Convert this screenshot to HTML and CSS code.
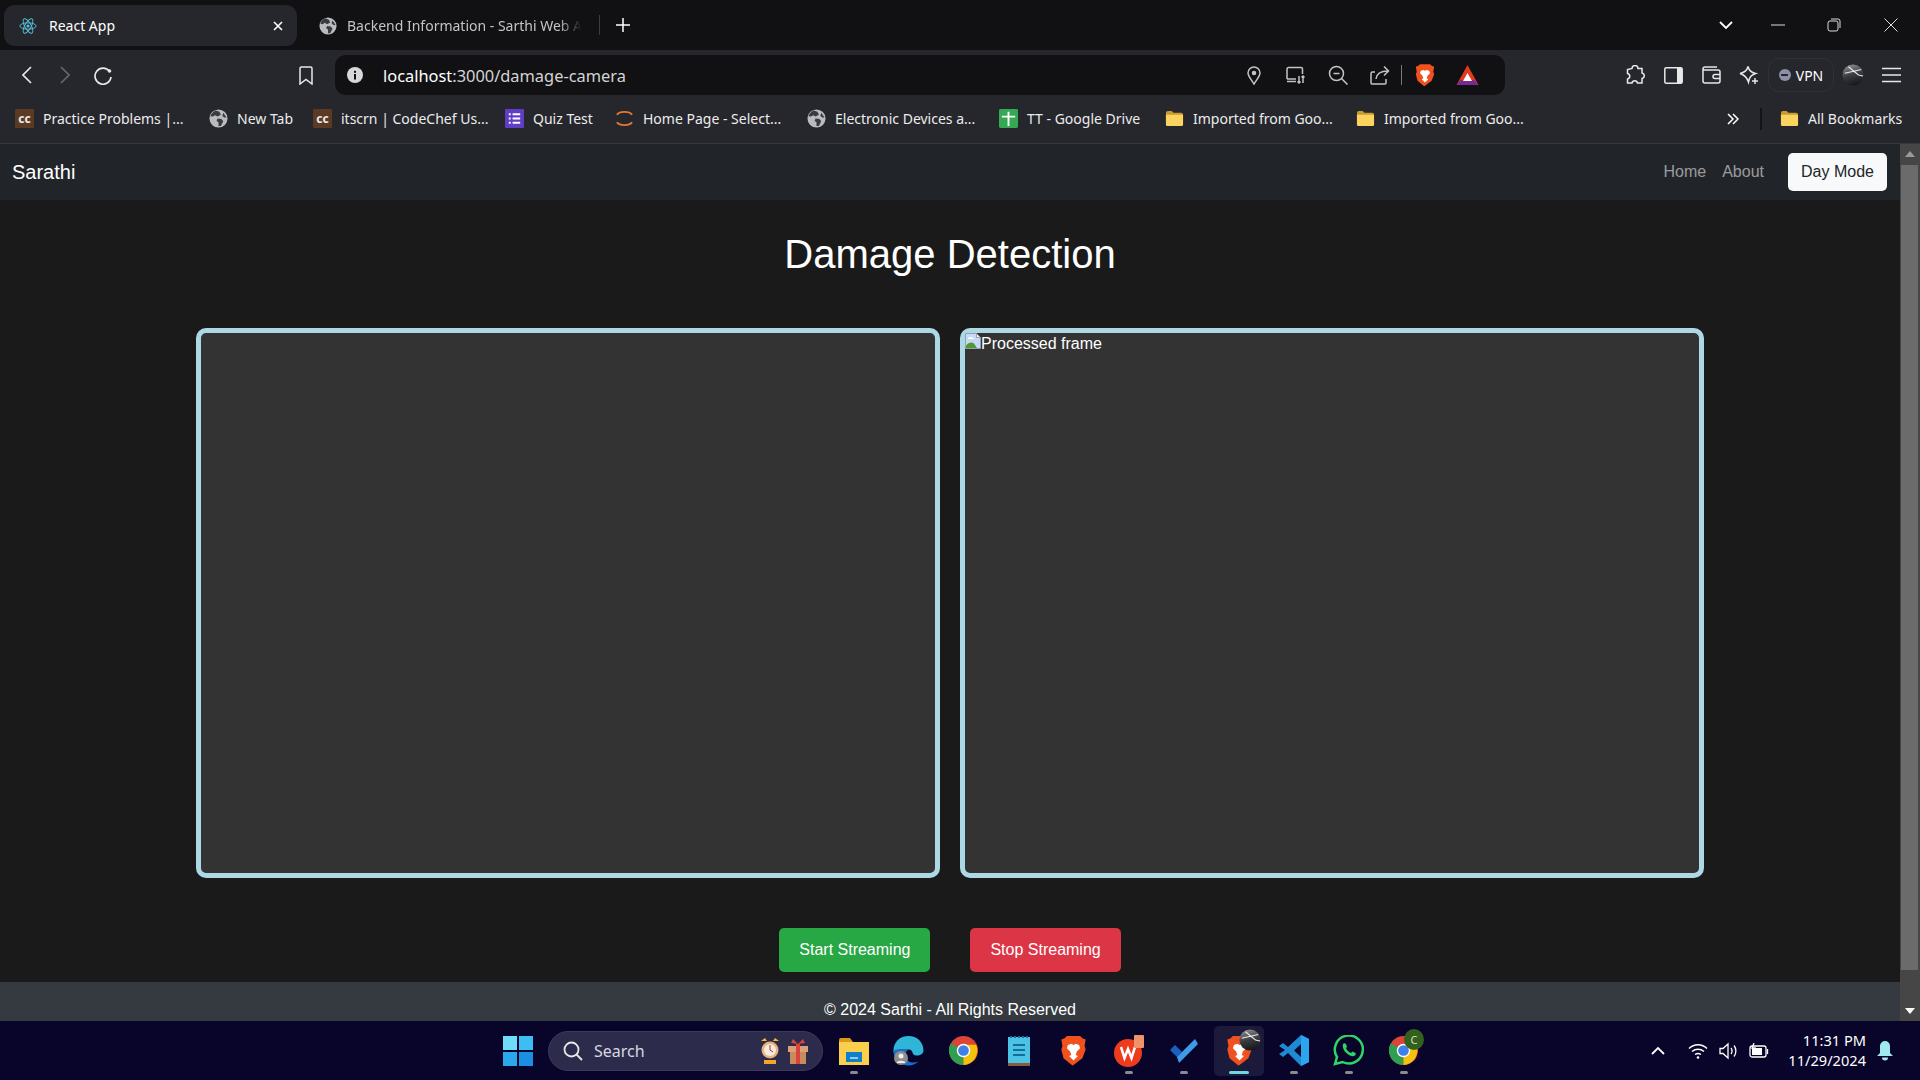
FILE: index.html
```html
<!DOCTYPE html>
<html lang="en">
  <head>
    <meta charset="UTF-8" />
    <title>React App</title>
    <link rel="stylesheet" href="styles.css">
  </head>
  <body>
    <!-- shared icons -->
    <svg class="defs" width="0" height="0">
      <defs>
        <linearGradient id="ball" x1="0.3" y1="0" x2="0.6" y2="1">
          <stop offset="0" stop-color="#8f8f8f"/>
          <stop offset="0.5" stop-color="#3a3b40"/>
          <stop offset="1" stop-color="#15161a"/>
        </linearGradient>
      </defs>
      <symbol id="globe" viewBox="0 0 20 20">
        <circle cx="10" cy="10" r="9.5" fill="#b9bbbe"/>
        <path d="M7 1.500 11 3 12.500 6 9 8 6.500 6.500 4 8 1.500 7.500C2.500 4.500 4.500 2.500 7 1.500Z" fill="#3a3b40"/>
        <path d="M9 10 13 10.500 15 13 12.500 18 10 18 10 14 8 12.500Z" fill="#3a3b40"/>
        <path d="M15 4 18.500 9 16 9 14 7Z" fill="#3a3b40"/>
      </symbol>
      <symbol id="folder" viewBox="0 0 20 18">
        <path d="M1 3a2 2 0 0 1 2-2h4l2 2h8a2 2 0 0 1 2 2v10a2 2 0 0 1-2 2H3a2 2 0 0 1-2-2Z" fill="#c99a2e"/>
        <path d="M1 5h18v10a2 2 0 0 1-2 2H3a2 2 0 0 1-2-2Z" fill="#fbd35f"/>
      </symbol>
      <symbol id="lion" viewBox="0 0 24 28">
        <path d="M6 1h12l2 2 3 1-1 6 1 3-3 8-8 6-1 .5L3 21 1 13l1-3-1-6 3-1Z" fill="#f1501f"/>
        <path d="M7 9l3-1 2 1 2-1 3 1 1 3-3 3-1 3 2 1-4 4-4-4 2-1-1-3-3-3Z" fill="#fff"/>
      </symbol>
      <symbol id="chrome-logo" viewBox="0 0 32 32">
        <circle cx="16" cy="16" r="15" fill="#db4437"/>
        <path d="M16 16 3 8.500A15 15 0 0 0 16 31Z" fill="#2f9e4f"/>
        <path d="M16 10h13a15 15 0 0 1-13 21l-0-15Z" fill="#f4c20d"/>
        <circle cx="16" cy="16" r="7" fill="#fff"/>
        <circle cx="16" cy="16" r="5.500" fill="#3f7fe8"/>
      </symbol>
      <symbol id="profile" viewBox="0 0 24 24">
        <circle cx="12" cy="12" r="11.500" fill="url(#ball)"/>
        <path d="M3 10 21 6M7 3l11 9 5 1" fill="none" stroke="#e8e8e8" stroke-width="1.200"/>
      </symbol>
    </svg>

    <div class="tabstrip">
      <div class="tab tab-active">
        <svg class="tab-icon" viewBox="0 0 20 20" fill="none" stroke="#58c4dc" stroke-width="1">
          <ellipse cx="10" cy="10" rx="9" ry="3.500"/>
          <ellipse cx="10" cy="10" rx="9" ry="3.500" transform="rotate(60 10 10)"/>
          <ellipse cx="10" cy="10" rx="9" ry="3.500" transform="rotate(120 10 10)"/>
          <circle cx="10" cy="10" r="1.700" fill="#58c4dc" stroke="none"/>
        </svg>
        <span class="tab-title">React App</span>
        <svg class="tab-close" viewBox="0 0 10 10" stroke="#fff" stroke-width="1.600"><path d="M1 1l8 8M9 1l-8 8"/></svg>
      </div>
      <div class="tab tab-other">
        <svg class="tab-icon"><use href="#globe"/></svg>
        <span class="tab-title tab-fade">Backend Information - Sarthi Web A</span>
      </div>
      <div class="tab-sep"></div>
      <svg class="tab-plus" viewBox="0 0 14 14" stroke="#fff" stroke-width="1.500"><path d="M7 0v14M0 7h14"/></svg>
      <div class="win-controls">
        <div class="win-btn win-chevron"><svg width="14" height="8" viewBox="0 0 14 8" fill="none" stroke="#fff" stroke-width="1.800"><path d="M1 1l6 6 6-6"/></svg></div>
        <div class="win-btn"><svg width="14" height="2" viewBox="0 0 14 2" stroke="#ddd"><path d="M0 1h14"/></svg></div>
        <div class="win-btn win-restore"><svg width="14" height="14" viewBox="0 0 14 14" fill="none" stroke="#ddd"><rect x="1" y="3" width="10" height="10" rx="2"/><path d="M4 1h7a2 2 0 0 1 2 2v7"/></svg></div>
        <div class="win-btn win-close"><svg width="14" height="14" viewBox="0 0 14 14" stroke="#ddd"><path d="M.5.500l13 13M13.500.500l-13 13"/></svg></div>
      </div>
    </div>

    <div class="toolbar">
      <div class="tool"><svg width="10" height="18" viewBox="0 0 10 18" fill="none" stroke="#e8e8e8" stroke-width="1.700"><path d="M9 1 1 9l8 8"/></svg></div>
      <div class="tool"><svg width="10" height="18" viewBox="0 0 10 18" fill="none" stroke="#66676b" stroke-width="1.700"><path d="M1 1l8 8-8 8"/></svg></div>
      <div class="tool"><svg width="20" height="20" viewBox="0 0 20 20" fill="none" stroke="#e8e8e8" stroke-width="1.700"><path d="M16.500 6.500A8 8 0 1 0 18 12"/><circle cx="16.500" cy="6" r="1.800" fill="#e8e8e8" stroke="none"/></svg></div>
      <div class="tool tool-bookmark"><svg width="14" height="19" viewBox="0 0 14 19" fill="none" stroke="#e8e8e8" stroke-width="1.500"><path d="M1 2.500A1.500 1.500 0 0 1 2.500 1h9A1.500 1.500 0 0 1 13 2.500V18l-6-4.500L1 18Z"/></svg></div>
      <div class="urlbar">
        <svg class="url-info" viewBox="0 0 16 16"><circle cx="8" cy="8" r="8" fill="#d8d8d8"/><rect x="7" y="7" width="2" height="5.500" fill="#111"/><rect x="7" y="3.800" width="2" height="2" fill="#111"/></svg>
        <span class="url-text"><span class="url-host">localhost</span>:3000/damage-camera</span>
        <div class="url-icons">
          <div class="url-cell"><svg width="14" height="19" viewBox="0 0 14 19" fill="none" stroke="#c4c4c6" stroke-width="1.500"><path d="M7 18C4 13 1 10 1 7a6 6 0 0 1 12 0c0 3-3 6-6 11Z"/><circle cx="7" cy="7" r="1.500" fill="#c4c4c6"/></svg></div>
          <div class="url-cell"><svg width="20" height="18" viewBox="0 0 20 18" fill="none" stroke="#c4c4c6" stroke-width="1.500"><path d="M1 13V3a1.500 1.500 0 0 1 1.500-1.500H15A1.500 1.500 0 0 1 16.500 3v5"/><path d="M1 13h9M1 15.500h9M13 10v7M17 17v-7M11.500 15.500 13 17l1.500-1.500M15.500 11.500 17 10l1.500 1.500"/></svg></div>
          <div class="url-cell"><svg width="20" height="20" viewBox="0 0 20 20" fill="none" stroke="#c4c4c6" stroke-width="1.500"><circle cx="8.500" cy="8.500" r="7"/><path d="M5.500 8.500h6M13.500 13.500l6 6"/></svg></div>
          <div class="url-cell"><svg width="20" height="20" viewBox="0 0 20 20" fill="none" stroke="#c4c4c6" stroke-width="1.500"><path d="M5 7H2.500A1.500 1.500 0 0 0 1 8.500V18a1 1 0 0 0 1 1h13a1 1 0 0 0 1-1v-4"/><path d="M6 14c.5-5 4-8 12-8M14 1.500 18.500 6 14 10.500"/></svg></div>
          <div class="url-sep"></div>
          <div class="url-cell"><svg width="20" height="24"><use href="#lion"/></svg></div>
          <div class="url-cell"><svg width="23" height="22" viewBox="0 0 23 22"><path d="M11.500 1 22.500 21H.5Z" fill="#e33a1f"/><path d="M.5 21h22l-4-5H4.500Z" fill="#7a2a8c"/><path d="M11.500 9 16 17H7Z" fill="#fff"/></svg></div>
        </div>
      </div>
      <div class="tool-right">
        <div class="tool"><svg width="20" height="20" viewBox="0 0 20 20" fill="none" stroke="#e8e8e8" stroke-width="1.500"><path d="M7 3.500a3 3 0 0 1 6 0h4v4.500a2.800 2.800 0 0 1 0 5.500V18h-4.500a2.800 2.800 0 0 0-5.500 0H2.500v-4a2.800 2.800 0 0 0 0-5.500V4.500Z"/></svg></div>
        <div class="tool"><svg width="19" height="17" viewBox="0 0 19 17"><rect x=".8" y=".8" width="17.400" height="15.400" rx="1.500" fill="none" stroke="#e8e8e8" stroke-width="1.500"/><rect x="13" y="1" width="5" height="15" fill="#e8e8e8"/></svg></div>
        <div class="tool"><svg width="19" height="18" viewBox="0 0 19 18" fill="none" stroke="#e8e8e8" stroke-width="1.500"><path d="M15 1H3a2 2 0 0 0-2 2v12a2 2 0 0 0 2 2h13a2 2 0 0 0 2-2V6a2 2 0 0 0-2-2H1"/><path d="M18 8.500h-5a2 2 0 0 0 0 4h5"/></svg></div>
        <div class="tool"><svg width="20" height="20" viewBox="0 0 20 20" fill="none" stroke="#e8e8e8" stroke-width="1.500"><path d="M9 1.500c1 4 3 6 7.500 7C12 10 10.500 12 9.500 17 8 12.500 6 10 1 8.500c5-1 7-3 8-7Z"/><path d="M16 13v6M13 16h6"/></svg></div>
        <div class="vpn"><span class="vpn-dot"></span>VPN</div>
        <div class="tool"><svg width="22" height="22"><use href="#profile"/></svg></div>
        <div class="tool"><svg width="19" height="16" viewBox="0 0 19 16" stroke="#e8e8e8" stroke-width="1.500"><path d="M0 1.500h19M0 8h19M0 14.500h19"/></svg></div>
      </div>
    </div>

    <div class="bookmarks">
      <a class="bm"><span class="cc">cc</span>Practice Problems |...</a>
      <a class="bm"><svg class="bm-icon"><use href="#globe"/></svg>New Tab</a>
      <a class="bm"><span class="cc">cc</span>itscrn | CodeChef Us...</a>
      <a class="bm"><svg class="bm-icon" viewBox="0 0 20 20"><rect width="20" height="20" rx="1" fill="#5f3dc4"/><path d="M4 5.500h2M8 5.500h8M4 10h2M8 10h8M4 14.500h2M8 14.500h8" stroke="#fff" stroke-width="2"/></svg>Quiz Test</a>
      <a class="bm"><svg class="bm-icon" viewBox="0 0 20 20" fill="none" stroke="#e8772e" stroke-width="2"><path d="M2 6c3-4 13-4 16 0M2 14c3 4 13 4 16 0"/></svg>Home Page - Select...</a>
      <a class="bm"><svg class="bm-icon"><use href="#globe"/></svg>Electronic Devices a...</a>
      <a class="bm"><svg class="bm-icon" viewBox="0 0 20 20"><rect width="20" height="20" rx="1.500" fill="#34a853"/><path d="M3 8h14M10 3v15" stroke="#fff" stroke-width="2"/></svg>TT - Google Drive</a>
      <a class="bm"><svg class="bm-icon"><use href="#folder"/></svg>Imported from Goo...</a>
      <a class="bm"><svg class="bm-icon"><use href="#folder"/></svg>Imported from Goo...</a>
      <svg class="bm-more" viewBox="0 0 12 12" fill="none" stroke="#fff" stroke-width="1.500"><path d="M1 1l5 5-5 5M6 1l5 5-5 5"/></svg>
      <div class="bm-sep"></div>
      <a class="bm"><svg class="bm-icon"><use href="#folder"/></svg>All Bookmarks</a>
    </div>

    <div class="viewport">
      <div class="page">
        <nav class="navbar">
          <a class="brand">Sarathi</a>
          <div class="nav-links">
            <a class="nav-link">Home</a>
            <a class="nav-link">About</a>
            <button class="mode-btn">Day Mode</button>
          </div>
        </nav>
        <main class="content">
          <h1 class="title">Damage Detection</h1>
          <div class="frames">
            <div class="frame"></div>
            <div class="frame">
              <span class="broken">
                <svg class="broken-icon" viewBox="0 0 16 16">
                  <path d="M.5.500h11l4 4v11H.5Z" fill="#c5daf5" stroke="#9aa0a6"/>
                  <path d="M11.500.500v4h4Z" fill="#fff" stroke="#9aa0a6"/>
                  <path d="M1 15v-2.500c2.500-3 5.500-4 8-2l3 4.500Z" fill="#4f9a35"/>
                  <path d="M3 5.500c.5-1.500 3-2 4-.8 1-.2 2 .3 2 1.300H3.500Z" fill="#fff"/>
                </svg>Processed frame</span>
            </div>
          </div>
          <div class="actions">
            <button class="btn btn-start">Start Streaming</button>
            <button class="btn btn-stop">Stop Streaming</button>
          </div>
        </main>
        <footer class="footer">© 2024 Sarthi - All Rights Reserved</footer>
      </div>
      <div class="scrollbar">
        <div class="scroll-arrow"><svg width="10" height="6" viewBox="0 0 10 6"><path d="M5 0l5 6H0Z" fill="#9a9a9a"/></svg></div>
        <div class="scroll-track"><div class="scroll-thumb"></div></div>
        <div class="scroll-arrow"><svg width="10" height="6" viewBox="0 0 10 6"><path d="M0 0h10L5 6Z" fill="#fff"/></svg></div>
      </div>
    </div>

    <div class="taskbar">
      <div class="start">
        <svg width="30" height="30" viewBox="0 0 30 30"><rect width="14" height="14" fill="#6fdcfb"/><rect x="16" width="14" height="14" fill="#3cbdf3"/><rect y="16" width="14" height="14" fill="#2aa8ec"/><rect x="16" y="16" width="14" height="14" fill="#1a8fe3"/></svg>
      </div>
      <div class="search">
        <svg width="20" height="20" viewBox="0 0 20 20" fill="none" stroke="#e8e8e8" stroke-width="1.800"><circle cx="8.500" cy="8.500" r="7"/><path d="M13.500 13.500 19 19"/></svg>
        <span class="search-text">Search</span>
        <svg class="search-deco" width="48" height="30" viewBox="0 0 48 30">
          <circle cx="10" cy="14" r="8.500" fill="#e8b27a"/><circle cx="10" cy="14" r="6" fill="#f5ece0"/><path d="M10 9v5l3 2" stroke="#a33" fill="none"/>
          <path d="M1 5l4-3 2 3ZM19 5l-4-3-2 3Z" fill="#f2b92c"/><rect x="4" y="24" width="12" height="4" fill="#f2a52c"/>
          <rect x="30" y="10" width="16" height="18" fill="#c98a5e"/><rect x="28" y="10" width="20" height="6" fill="#d9a07a"/><rect x="36" y="8" width="4" height="20" fill="#d9453a"/><path d="M38 8l-5-5-2 4ZM38 8l5-5 2 4Z" fill="#d9453a"/>
        </svg>
      </div>
      <div class="apps">
        <div class="app app-open"><svg width="30" height="28" viewBox="0 0 30 28"><path d="M0 3a2 2 0 0 1 2-2h9l3 4H0Z" fill="#d99a1c"/><rect y="5" width="30" height="23" fill="#fbcf4c"/><path d="M7 15h16v10H7Z" fill="#0f7fc9"/><path d="M11 21h8" stroke="#bfe6fb" stroke-width="1.500"/></svg></div>
        <div class="app"><svg width="31" height="31" viewBox="0 0 31 31"><path d="M15.500 1C24 1 30.500 7 30.500 15.500c0 3-3 5-7 5-6 0-2-6-8-6S5 21 10 27C4 25 .5 21 .5 15.500.5 7 7 1 15.500 1Z" fill="#2fb5d8"/><path d="M.5 15.500c0 8 7 15 15 15 4 0 8-2 10-4-8 3-13-1-13-6 0-3 1-5 3-6-7-1-13 0-15 1Z" fill="#1a6fc9"/><circle cx="8" cy="23" r="7" fill="#8d8d8d"/><circle cx="8" cy="21" r="2.500" fill="#eee"/><path d="M3.500 28c1-3 8-3 9 0Z" fill="#eee"/></svg></div>
        <div class="app"><svg width="31" height="31"><use href="#chrome-logo"/></svg></div>
        <div class="app"><svg width="22" height="30" viewBox="0 0 22 30"><rect y="1" width="22" height="26" fill="#4cc3e6"/><rect y="27" width="22" height="3" fill="#8a5a3c"/><path d="M5 9h12M5 14h12M5 19h12" stroke="#136f96" stroke-width="2"/><path d="M2 1h18" stroke="#136f96" stroke-width="2" stroke-dasharray="2 2"/></svg></div>
        <div class="app"><svg width="27" height="31"><use href="#lion"/></svg></div>
        <div class="app app-open"><svg width="30" height="32" viewBox="0 0 30 32"><ellipse cx="14" cy="18" rx="14" ry="14" fill="#ee3b1e"/><path d="M7 12l3.500 11L14 14l3.500 9L21 12" fill="none" stroke="#fff" stroke-width="2.500"/><rect x="20" y="0" width="10" height="13" rx="1" fill="#f0926a"/></svg></div>
        <div class="app app-open"><svg width="30" height="26" viewBox="0 0 30 26"><path d="M1 12l5-5 7 7-5 5Z" fill="#1b5fc4"/><path d="M8 19 26 1l3 5-19 19Z" fill="#3d9be9"/></svg></div>
        <div class="app app-open app-active">
          <svg width="27" height="31"><use href="#lion"/></svg>
          <svg class="app-avatar"><use href="#profile"/></svg>
        </div>
        <div class="app app-open"><svg width="30" height="31" viewBox="0 0 30 31"><path d="M22 0 30 4v23l-8 4L9 18l-5 4-4-3 6-4-6-4 4-3 5 4Z" fill="#1f8ad2"/><path d="M22 0 30 4v23l-8 4Z" fill="#2aa5ee"/><path d="M22 9v13l-7-6.500Z" fill="#0b0a2c"/></svg></div>
        <div class="app app-open"><svg width="31" height="31" viewBox="0 0 31 31"><path d="M2 29l2-7A14 14 0 1 1 9.500 27Z" fill="none" stroke="#2fd366" stroke-width="2.500"/><path d="M10 9c-1 3 1 7 4 9.500s6 3.500 8 2c1-1 1-2 .5-2.500l-3-1.500-1.500 1.500c-2-.5-4.500-3-5-5L14 12l-1-3c-1-1-2-1-3 0Z" fill="#2fd366"/></svg></div>
        <div class="app app-open">
          <svg width="31" height="31"><use href="#chrome-logo"/></svg>
          <span class="app-badge">C</span>
        </div>
      </div>
      <div class="tray">
        <svg width="14" height="8" viewBox="0 0 14 8" fill="none" stroke="#fff" stroke-width="1.800"><path d="M1 7l6-6 6 6"/></svg>
        <svg class="tray-wifi" width="20" height="16" viewBox="0 0 20 16" fill="none" stroke="#fff" stroke-width="1.400"><path d="M1 5.500c5-5 13-5 18 0M4 8.500c3.500-3 8.500-3 12 0M7 11.500c1.800-1.300 4.200-1.300 6 0"/><circle cx="10" cy="14.500" r="1.300" fill="#fff" stroke="none"/></svg>
        <svg class="tray-vol" width="20" height="18" viewBox="0 0 20 18" fill="none" stroke="#fff" stroke-width="1.300"><path d="M1 6.500v5h3l5 4.500V2L4 6.500Z"/><path d="M12 6c1.300 1.800 1.300 4.200 0 6M15 3.500c2.500 3 2.500 8 0 11"/></svg>
        <svg class="tray-bat" width="20" height="16" viewBox="0 0 20 16" fill="none" stroke="#fff" stroke-width="1.300"><rect x="1" y="3" width="16" height="11" rx="2"/><rect x="3" y="5" width="10" height="7" fill="#fff" stroke="none"/><path d="M18.500 6v5"/><path d="M5 0 3 5h3L4 9" stroke="#fff"/></svg>
        <div class="clock"><span>11:31 PM</span><span>11/29/2024</span></div>
        <svg class="tray-bell" width="16" height="20" viewBox="0 0 16 20"><path d="M8 0a5 5 0 0 1 5 5v7l3 3H0l3-3V5a5 5 0 0 1 5-5Z" fill="#9feaf0"/><path d="M5 16.500h6a3 3 0 0 1-6 0Z" fill="#9feaf0"/></svg>
      </div>
    </div>
  </body>
</html>
```

FILE: styles.css
```css
* {
  box-sizing: border-box;
}
html,
body {
  height: 100%;
}
body {
  margin: 0;
  display: flex;
  flex-direction: column;
  overflow: hidden;
  font-family: "Noto Sans", sans-serif;
  color: #fff;
  background-color: #1a1a1a;
}
.defs {
  position: absolute;
}
svg {
  display: block;
  flex-shrink: 0;
}

/* tab strip */
.tabstrip {
  height: 50px;
  flex-shrink: 0;
  display: flex;
  align-items: flex-start;
  padding-left: 4px;
  background-color: #111113;
  font-size: 14px;
}
.tab {
  height: 41px;
  margin-top: 5px;
  display: flex;
  align-items: center;
  border-radius: 11px;
}
.tab-active {
  width: 293px;
  padding: 0 14px 0 15px;
  background-color: #26272c;
}
.tab-other {
  width: 302px;
  padding-left: 22px;
  color: #c4c4c8;
}
.tab-icon {
  width: 18px;
  height: 18px;
}
.tab-title {
  margin-left: 12px;
  white-space: nowrap;
  flex: 1;
}
.tab-other .tab-title {
  margin-left: 10px;
  flex: none;
}
.tab-fade {
  -webkit-mask-image: linear-gradient(to right, #000 90%, transparent);
  mask-image: linear-gradient(to right, #000 90%, transparent);
}
.tab-close {
  width: 10px;
  height: 10px;
}
.tab-sep {
  width: 1px;
  height: 20px;
  margin-top: 15px;
  background-color: #3c3d42;
}
.tab-plus {
  width: 14px;
  height: 14px;
  margin: 18px 0 0 16px;
}
.win-controls {
  margin-left: auto;
  display: flex;
  height: 50px;
}
.win-btn {
  width: 57px;
  display: flex;
  align-items: center;
  justify-content: center;
}
.win-chevron {
  width: 46px;
}
.win-restore {
  width: 56px;
}
.win-close {
  width: 58px;
}

/* toolbar */
.toolbar {
  height: 45px;
  flex-shrink: 0;
  display: flex;
  align-items: flex-end;
  padding-left: 8px;
  background-color: #26272c;
}
.tool {
  width: 38px;
  height: 40px;
  display: flex;
  align-items: center;
  justify-content: center;
}
.tool-bookmark {
  margin-left: 165px;
}
.urlbar {
  width: 1170px;
  height: 40px;
  margin-left: 10px;
  display: flex;
  align-items: center;
  padding: 0 17px 0 12px;
  border-radius: 11px;
  background-color: #111113;
}
.url-info {
  width: 16px;
  height: 16px;
}
.url-text {
  margin-left: 20px;
  font-size: 16.4px;
  color: #d4d4d6;
}
.url-host {
  color: #fff;
}
.url-icons {
  margin-left: auto;
  display: flex;
  align-items: center;
}
.url-cell {
  width: 42px;
  display: flex;
  justify-content: center;
}
.url-sep {
  width: 1px;
  height: 20px;
  margin-right: 2px;
  background-color: #77787c;
}
.tool-right {
  margin-left: 111px;
  display: flex;
  align-items: center;
}
.vpn {
  width: 66px;
  height: 34px;
  display: flex;
  align-items: center;
  justify-content: center;
  gap: 5px;
  border: 1px solid #303137;
  border-radius: 11px;
  font-size: 14px;
}
.vpn-dot {
  width: 12px;
  height: 12px;
  border-radius: 50%;
  background: linear-gradient(#26272c, #26272c) center/7px 2px no-repeat;
  background-color: #8d90a6;
}

/* bookmarks */
.bookmarks {
  height: 49px;
  flex-shrink: 0;
  display: grid;
  grid-template-columns: 194px 104px 192px 110px 192px 192px 166px 191px 371px 33px 20px auto;
  align-items: center;
  padding: 0 0 1px 15px;
  background-color: #26272c;
  border-bottom: 1px solid #38393e;
  font-size: 14px;
}
.bm {
  display: flex;
  align-items: center;
  gap: 9px;
  white-space: nowrap;
  color: #ececec;
}
.bm-icon {
  width: 19px;
  height: 19px;
}
.cc {
  width: 19px;
  height: 19px;
  display: flex;
  align-items: center;
  justify-content: center;
  background-color: #5a3a22;
  border-radius: 1px;
  font-size: 12px;
  font-weight: 700;
  line-height: 1;
}
.bm-more {
  width: 12px;
  height: 12px;
}
.bm-sep {
  width: 2px;
  height: 22px;
  background-color: #141416;
}

/* page */
.viewport {
  flex: 1;
  min-height: 0;
  display: flex;
}
.page {
  flex: 1;
  min-width: 0;
  overflow: hidden;
  font-family: "Liberation Sans", Arial, sans-serif;
  background-color: #1a1a1a;
}
.navbar {
  height: 56px;
  display: flex;
  align-items: center;
  justify-content: space-between;
  padding: 0 13px 0 12px;
  background-color: #212529;
}
.brand {
  font-size: 20px;
}
.nav-links {
  display: flex;
  align-items: center;
}
.nav-link {
  margin-right: 16px;
  font-size: 16px;
  color: rgba(255, 255, 255, 0.55);
}
.nav-link + .nav-link {
  margin-right: 24px;
}
.mode-btn {
  width: 99px;
  height: 38px;
  border: none;
  border-radius: 5px;
  background-color: #f8f9fa;
  color: #212529;
  font-family: inherit;
  font-size: 16px;
}
.content {
  text-align: center;
}
.title {
  margin: 0;
  padding-top: 30px;
  font-size: 40px;
  font-weight: 400;
  line-height: 48px;
}
.frames {
  display: flex;
  justify-content: center;
  gap: 20px;
  margin-top: 50px;
}
.frame {
  width: 744px;
  height: 550px;
  border: 5px solid #add8e6;
  border-radius: 10px;
  background-color: #333;
  text-align: left;
}
.broken {
  display: flex;
  align-items: flex-start;
  font-size: 16px;
  line-height: 22px;
}
.broken-icon {
  width: 16px;
  height: 16px;
}
.actions {
  display: flex;
  justify-content: center;
  gap: 40px;
  margin-top: 50px;
  margin-bottom: 10px;
}
.btn {
  height: 44px;
  padding: 0 20px;
  border: none;
  border-radius: 5px;
  color: #fff;
  font-family: inherit;
  font-size: 16px;
}
.btn-start {
  background-color: #28a745;
}
.btn-stop {
  background-color: #dc3545;
}
.footer {
  height: 40px;
  padding-top: 16px;
  text-align: center;
  font-size: 16px;
  line-height: 24px;
  background-color: #343a40;
}
.scrollbar {
  width: 20px;
  display: flex;
  flex-direction: column;
  background-color: #464646;
}
.scroll-arrow {
  height: 20px;
  display: flex;
  align-items: center;
  justify-content: center;
}
.scroll-track {
  flex: 1;
  padding: 1px 2px 0 1px;
}
.scroll-thumb {
  height: 805px;
  background-color: #6b6b6b;
}

/* taskbar */
.taskbar {
  height: 59px;
  flex-shrink: 0;
  display: flex;
  align-items: center;
  padding-left: 490px;
  background-color: #08042a;
}
.start {
  width: 55px;
  display: flex;
  justify-content: center;
}
.search {
  width: 275px;
  height: 40px;
  margin-left: 3px;
  display: flex;
  align-items: center;
  padding: 0 4px 0 14px;
  border: 1px solid #3a3a58;
  border-radius: 20px;
  background-color: #2d2b4c;
}
.search-text {
  margin-left: 11px;
  font-size: 16px;
  color: #d8d8e0;
}
.search-deco {
  margin-left: auto;
  margin-right: 10px;
}
.apps {
  display: flex;
  margin-left: 3px;
}
.app {
  position: relative;
  width: 55px;
  height: 50px;
  display: flex;
  align-items: center;
  justify-content: center;
  border-radius: 5px;
}
.app-open::after {
  content: "";
  position: absolute;
  left: 24px;
  bottom: 2px;
  width: 8px;
  height: 3px;
  border-radius: 2px;
  background-color: #8a8a92;
}
.app-active {
  width: 50px;
  margin: 0 2px 0 3px;
  background-color: #1c1a3a;
}
.app-active::after {
  left: 15px;
  width: 20px;
  background-color: #6fd6e0;
}
.app-avatar {
  position: absolute;
  top: 3px;
  right: 3px;
  width: 22px;
  height: 22px;
}
.app-badge {
  position: absolute;
  top: 3px;
  right: 7px;
  width: 20px;
  height: 21px;
  display: flex;
  align-items: center;
  justify-content: center;
  border-radius: 50%;
  background-color: #33601f;
  color: #cfe0b0;
  font-size: 11px;
}
.tray {
  margin-left: auto;
  display: flex;
  align-items: center;
  padding-right: 27px;
}
.tray-wifi {
  margin-left: 23px;
}
.tray-vol {
  margin-left: 11px;
}
.tray-bat {
  margin-left: 10px;
}
.clock {
  width: 97px;
  margin-top: -2px;
  display: flex;
  flex-direction: column;
  align-items: flex-end;
  font-size: 14.6px;
  line-height: 20px;
}
.tray-bell {
  margin-left: 11px;
}
```
